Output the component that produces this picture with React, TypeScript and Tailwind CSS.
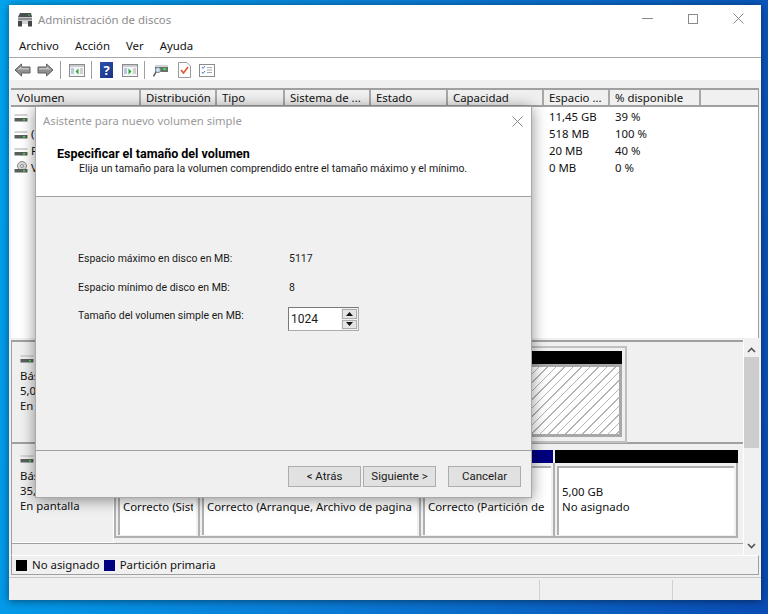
const uiFont = { fontFamily: '"Noto Sans", sans-serif' }
const dialogFont = { fontFamily: 'Roboto, sans-serif' }

const columns = [
  { name: 'Volumen', width: 'w-[129px]' },
  { name: 'Distribución', width: 'w-[76px]' },
  { name: 'Tipo', width: 'w-[68px]' },
  { name: 'Sistema de ...', width: 'w-[86px]' },
  { name: 'Estado', width: 'w-[77px]' },
  { name: 'Capacidad', width: 'w-[96px]' },
  { name: 'Espacio ...', width: 'w-[66px]' },
  { name: '% disponible', width: 'w-[91px]' },
]

const rows = [
  { label: '', free: '11,45 GB', pct: '39 %', cd: false },
  { label: '(', free: '518 MB', pct: '100 %', cd: false },
  { label: 'F', free: '20 MB', pct: '40 %', cd: false },
  { label: 'V', free: '0 MB', pct: '0 %', cd: true },
]

const DriveIcon = ({ cd = false }: { cd?: boolean }) => (
  <svg width="14" height="14" viewBox="0 0 14 14" className="shrink-0">
    {cd && <circle cx="8" cy="5" r="4.5" fill="#d8d8d8" stroke="#8a8a8a" />}
    {cd && <circle cx="8" cy="5" r="1.5" fill="#fff" stroke="#8a8a8a" />}
    <rect x="0.5" y="4" width="13" height="2" fill={cd ? 'none' : '#d4d4d4'} />
    <rect x="0.5" y="8" width="13" height="3.5" fill="#5a5f5c" />
    <rect x="9" y="9" width="2" height="1.5" fill="#3fe04a" />
  </svg>
)

const ArrowIcon = ({ flip = false }: { flip?: boolean }) => (
  <svg width="17" height="14" viewBox="0 0 17 14" className={flip ? 'scale-x-[-1]' : ''}>
    <path d="M1 7 L7.5 1 V4 H16 V10 H7.5 V13 Z" fill="#8f8f8f" stroke="#5f5f5f" />
    <path d="M3 7 L7.5 3 V5 H15 V6.5 H7 Z" fill="#c4c4c4" />
  </svg>
)

const PaneIcon = ({ right = false }: { right?: boolean }) => (
  <svg width="16" height="14" viewBox="0 0 16 14">
    <rect x="0.5" y="1.5" width="15" height="12" fill="#f4f6f8" stroke="#8a8a8a" />
    <rect x="1" y="2" width="14" height="2" fill="#c9ccd0" />
    <path d="M2 6h3M2 8h3M2 10h3" stroke="#7c9cc0" />
    <path d="M11 6h3M11 8h3M11 10h3" stroke="#a8a8a8" />
    {right ? (
      <path d="M6.5 5.5 L9.5 8.5 L6.5 11.5 Z" fill="#2ea43a" />
    ) : (
      <path d="M9.5 5.5 L6.5 8.5 L9.5 11.5 Z" fill="#2ea43a" />
    )}
  </svg>
)

const Separator = () => <div className="w-px h-[18px] bg-[#a0a0a0] shrink-0" />

const Partition = ({
  width,
  bar,
  lines,
  last = false,
}: {
  width: string
  bar: string
  lines: string[]
  last?: boolean
}) => (
  <div className={`${width} h-full flex flex-col shrink-0`}>
    <div className={`h-[13px] ml-[2px] shrink-0 ${bar}`} />
    <div
      className={`flex-1 min-h-0 flex border-l-2 border-b-2 border-[#b0b0b0] bg-[#f0f0f0] ${last ? 'border-r-2' : ''}`}
    >
      <div className="flex-1 min-w-0 ml-[2px] mr-[2px] mt-[3px] mb-[1px] bg-white border-l-2 border-t-2 border-[#b0b0b0] pl-[3px] pr-[3px] pt-[16px] leading-[15px]">
        <div className="overflow-hidden whitespace-nowrap">
          {lines.map((line) => (
            <div key={line}>{line || '\u00a0'}</div>
          ))}
        </div>
      </div>
    </div>
  </div>
)

const Wizard = () => (
  <div className="absolute left-[26px] top-[101px] w-[497px] h-[392px] bg-[#f0f0f0] border border-[#a8a8a8] shadow-[0_2px_14px_rgba(0,0,0,0.45)] flex flex-col text-[#1a1a1a]">
    <div className="bg-white h-[90px] border-b border-[#a0a0a0] shrink-0">
      <div className="flex items-center justify-between h-[28px] pl-[7px] pr-[8px]">
        <span className="text-[#9a9a9a] text-[11.3px]">Asistente para nuevo volumen simple</span>
        <svg width="11" height="11" viewBox="0 0 11 11">
          <path d="M0.5 0.5 L10.5 10.5 M10.5 0.5 L0.5 10.5" stroke="#8a8a8a" />
        </svg>
      </div>
      <div className="pl-[21px] pt-[11px] leading-[15px]" style={dialogFont}>
        <div className="font-bold text-black text-[12.5px]">Especificar el tamaño del volumen</div>
        <div className="pl-[22px] text-[10.5px]">
          Elija un tamaño para la volumen comprendido entre el tamaño máximo y el mínimo.
        </div>
      </div>
    </div>

    <div className="flex-1 pl-[42px] pt-[54px] text-[10.5px]" style={dialogFont}>
      <div className="flex items-center h-[16px]">
        <span className="w-[211px]">Espacio máximo en disco en MB:</span>
        <span>5117</span>
      </div>
      <div className="flex items-center h-[16px] mt-[13px]">
        <span className="w-[211px]">Espacio mínimo de disco en MB:</span>
        <span>8</span>
      </div>
      <div className="flex items-center h-[24px] mt-[11px]">
        <span className="w-[210px] -mt-[7px]">Tamaño del volumen simple en MB:</span>
        <div className="w-[71px] h-[24px] flex border border-[#7a7a7a] border-r-[#acacac] border-b-[#acacac] bg-white">
          <span className="flex-1 pl-[2px] leading-[22px] text-[12px]">1024</span>
          <div className="w-[17px] flex flex-col gap-[1px] bg-[#f0f0f0] p-[1px]">
            <div className="flex-1 bg-[#e4e4e4] border border-[#acacac] flex items-center justify-center">
              <svg width="7" height="4" viewBox="0 0 7 4">
                <path d="M3.5 0 L7 4 H0 Z" fill="#111" />
              </svg>
            </div>
            <div className="flex-1 bg-[#e4e4e4] border border-[#acacac] flex items-center justify-center">
              <svg width="7" height="4" viewBox="0 0 7 4">
                <path d="M0 0 H7 L3.5 4 Z" fill="#111" />
              </svg>
            </div>
          </div>
        </div>
      </div>
    </div>

    <div className="h-[47px] border-t border-[#a0a0a0] shrink-0 flex pt-[15px] pl-[252px] text-[11.5px]" style={dialogFont}>
      <button className="w-[73px] h-[21px] bg-[#e1e1e1] border border-[#adadad] leading-none">
        &lt; Atrás
      </button>
      <button className="w-[73px] h-[21px] ml-[2px] bg-[#e1e1e1] border border-[#adadad] leading-none">
        Siguiente &gt;
      </button>
      <button className="w-[73px] h-[21px] ml-[12px] bg-[#e1e1e1] border border-[#adadad] leading-none">
        Cancelar
      </button>
    </div>
  </div>
)

export default function App() {
  return (
    <div
      className="w-[768px] h-[614px] overflow-hidden bg-[linear-gradient(100deg,#00a4ef_0%,#0a7fd8_45%,#0a4cb4_100%)] pl-[9px] pt-[5px] text-[11.4px] text-[#111]"
      style={uiFont}
    >
      <div className="relative w-[752px] h-[595px] bg-[#f0f0f0] shadow-[0_1px_8px_rgba(0,0,0,0.5)] flex flex-col">
        {/* title + menu */}
        <div className="h-[28px] bg-white flex items-center shrink-0">
          <svg width="16" height="15" viewBox="0 0 16 15" className="ml-[8px] mt-[1px]">
            <path d="M3 1 H14 L15 5 H1 Z" fill="#4c4f52" />
            <rect x="11" y="2.5" width="2" height="1" fill="#39d34a" />
            <rect x="1" y="5.5" width="14" height="3" fill="#8e9194" />
            <rect x="1" y="9" width="4" height="5.5" fill="#45484b" />
            <rect x="11" y="9" width="4" height="5.5" fill="#45484b" />
            <rect x="5" y="9" width="6" height="3" fill="#d4d4d4" />
          </svg>
          <span className="ml-[5px] text-[#8c8c8c] mt-[2px]">Administración de discos</span>
          <div className="ml-auto flex items-center mr-[17px] -mt-[1px] gap-[35px]">
            <div className="w-[11px] h-px bg-[#8a8a8a]" />
            <div className="w-[10px] h-[10px] border border-[#8a8a8a]" />
            <svg width="11" height="11" viewBox="0 0 11 11">
              <path d="M0.5 0.5 L10.5 10.5 M10.5 0.5 L0.5 10.5" stroke="#8a8a8a" />
            </svg>
          </div>
        </div>
        <div className="h-[25px] bg-white border-b border-[#a8a8a8] flex items-center gap-[16px] pl-[10px] shrink-0 pt-[1px]">
          <span>Archivo</span>
          <span>Acción</span>
          <span>Ver</span>
          <span>Ayuda</span>
        </div>

        {/* toolbar */}
        <div className="h-[22px] bg-white flex items-center pl-[5px] pt-[2px] shrink-0">
          <ArrowIcon />
          <div className="w-[6px]" />
          <ArrowIcon flip />
          <div className="w-[6px]" />
          <Separator />
          <div className="w-[8px]" />
          <PaneIcon />
          <div className="w-[6px]" />
          <Separator />
          <div className="w-[8px]" />
          <div className="w-[13px] h-[16px] bg-[linear-gradient(135deg,#2a4fb0,#1a3484)] text-white font-bold text-[13px] leading-[16px] text-center">
            ?
          </div>
          <div className="w-[9px]" />
          <PaneIcon right />
          <div className="w-[6px]" />
          <Separator />
          <div className="w-[8px]" />
          <svg width="16" height="15" viewBox="0 0 16 15">
            <rect x="2" y="3" width="13" height="6" fill="#6b6f6c" />
            <rect x="2" y="2" width="13" height="2" fill="#d4d4d4" />
            <rect x="10" y="5" width="3" height="2" fill="#39e04a" />
            <circle cx="5" cy="7" r="2.6" fill="#cfe0ee" stroke="#7a8a98" />
            <path d="M3 9 L0.5 13.5" stroke="#555" strokeWidth="1.5" />
          </svg>
          <div className="w-[9px]" />
          <svg width="13" height="16" viewBox="0 0 13 16">
            <path d="M0.5 0.5 H9 L12.5 4 V15.5 H0.5 Z" fill="#fff" stroke="#9a9a9a" />
            <path d="M3 8 L5.5 11 L10 5" fill="none" stroke="#e0552a" strokeWidth="1.6" />
          </svg>
          <div className="w-[8px]" />
          <svg width="16" height="13" viewBox="0 0 16 13">
            <rect x="0.5" y="0.5" width="15" height="12" fill="#fff" stroke="#8a8a8a" />
            <path d="M3 3 L4 4.5 L6 2 M3 8 L4 9.5 L6 7" fill="none" stroke="#3f86d8" />
            <path d="M8 3.5h5M8 6h5M8 8.5h5" stroke="#a8a8a8" />
          </svg>
        </div>
        <div className="h-[8px] shrink-0 bg-[#f0f0f0]" />

        {/* volume list */}
        <div className="ml-[2px] mr-[2px] h-[250px] shrink-0 flex flex-col border-t-2 border-[#a0a0a0] border-r border-r-[#a0a0a0] bg-white">
          <div className="h-[17px] flex bg-[#f0f0f0] border-b-2 border-[#a0a0a0] shrink-0 pl-[1px]">
            {columns.map((col) => (
              <div
                key={col.name}
                className={`${col.width} shrink-0 border-r-2 border-[#a8a8a8] pl-[5px] leading-[16px] overflow-hidden whitespace-nowrap`}
              >
                {col.name}
              </div>
            ))}
          </div>
          <div className="flex-1 pl-[3px] pt-[1px]">
            {rows.map((row) => (
              <div key={row.free} className="h-[17px] flex items-center">
                <DriveIcon cd={row.cd} />
                <span className="ml-[3px] w-[518px] shrink-0">{row.label}</span>
                <span className="w-[66px] shrink-0">{row.free}</span>
                <span>{row.pct}</span>
              </div>
            ))}
          </div>
        </div>

        {/* disk map */}
        <div className="ml-[2px] mr-[2px] mt-[2px] h-[215px] shrink-0 flex border-l border-[#a0a0a0]">
          <div className="flex-1 flex flex-col border-t-2 border-[#a0a0a0]">
            <div className="h-[102px] flex border-b-2 border-[#a0a0a0] shrink-0">
              <div className="w-[102px] shrink-0 pl-[8px] pt-[9px] leading-[15px] border-r border-white">
                <DriveIcon />
                <div className="mt-[3px]">Básico</div>
                <div>5,00 GB</div>
                <div>En pantalla</div>
              </div>
              <div className="flex-1 pt-[4px] pl-[3px]">
                <div className="w-[510px] h-[97px] border-2 border-[#c0c0c0] flex flex-col">
                  <div className="h-[13px] bg-black ml-[2px] mr-[3px] mt-[3px] shrink-0" />
                  <div className="flex-1 ml-[2px] mr-[3px] mb-[4px] border-[3px] border-[#a8a8a8] bg-[repeating-linear-gradient(135deg,#ffffff_0px,#ffffff_5px,#b4b4b4_5px,#b4b4b4_6px)]" />
                </div>
              </div>
            </div>
            <div className="h-[99px] flex shrink-0">
              <div className="w-[102px] shrink-0 pl-[8px] pt-[7px] leading-[15px] border-r border-white border-b">
                <DriveIcon />
                <div className="mt-[3px]">Básico</div>
                <div>35,00 GB</div>
                <div>En pantalla</div>
              </div>
              <div className="flex-1 pt-[6px] pb-[5px] flex">
                <Partition width="w-[84px]" bar="bg-[#000080]" lines={['', 'Correcto (Sistema)']} />
                <Partition
                  width="w-[221px]"
                  bar="bg-[#000080]"
                  lines={['', 'Correcto (Arranque, Archivo de pagina']}
                />
                <Partition width="w-[134px]" bar="bg-[#000080]" lines={['', 'Correcto (Partición de']} />
                <Partition width="w-[185px]" bar="bg-black" lines={['5,00 GB', 'No asignado']} last />
              </div>
            </div>
            <div className="flex-1 border-t border-[#a0a0a0]" />
          </div>
          <div className="w-[16px] shrink-0 flex flex-col items-center bg-[#f0f0f0] border-l border-white">
            <svg width="9" height="6" viewBox="0 0 9 6" className="mt-[7px]">
              <path d="M1 5 L4.5 1.5 L8 5" fill="none" stroke="#555" strokeWidth="1.6" />
            </svg>
            <div className="w-full h-[91px] mt-[4px] bg-[#cdcdcd]" />
            <svg width="9" height="6" viewBox="0 0 9 6" className="mt-auto mb-[6px]">
              <path d="M1 1 L4.5 4.5 L8 1" fill="none" stroke="#555" strokeWidth="1.6" />
            </svg>
          </div>
        </div>

        {/* legend */}
        <div className="ml-[2px] mr-[2px] h-[20px] shrink-0 flex items-center pl-[4px] border-b border-r border-l border-[#a0a0a0] border-t border-t-white">
          <div className="w-[11px] h-[11px] bg-black" />
          <span className="ml-[5px] -mt-[1px]">No asignado</span>
          <div className="w-[11px] h-[11px] bg-[#000080] ml-[4px]" />
          <span className="ml-[5px] -mt-[1px]">Partición primaria</span>
        </div>

        {/* status bar */}
        <div className="flex-1 flex mt-[2px] border-t border-[#c8c8c8] pt-[2px]">
          <div className="w-[531px] border-r border-[#d0d0d0]" />
          <div className="w-[133px] border-r border-[#d0d0d0]" />
        </div>

        <Wizard />
      </div>
    </div>
  )
}
